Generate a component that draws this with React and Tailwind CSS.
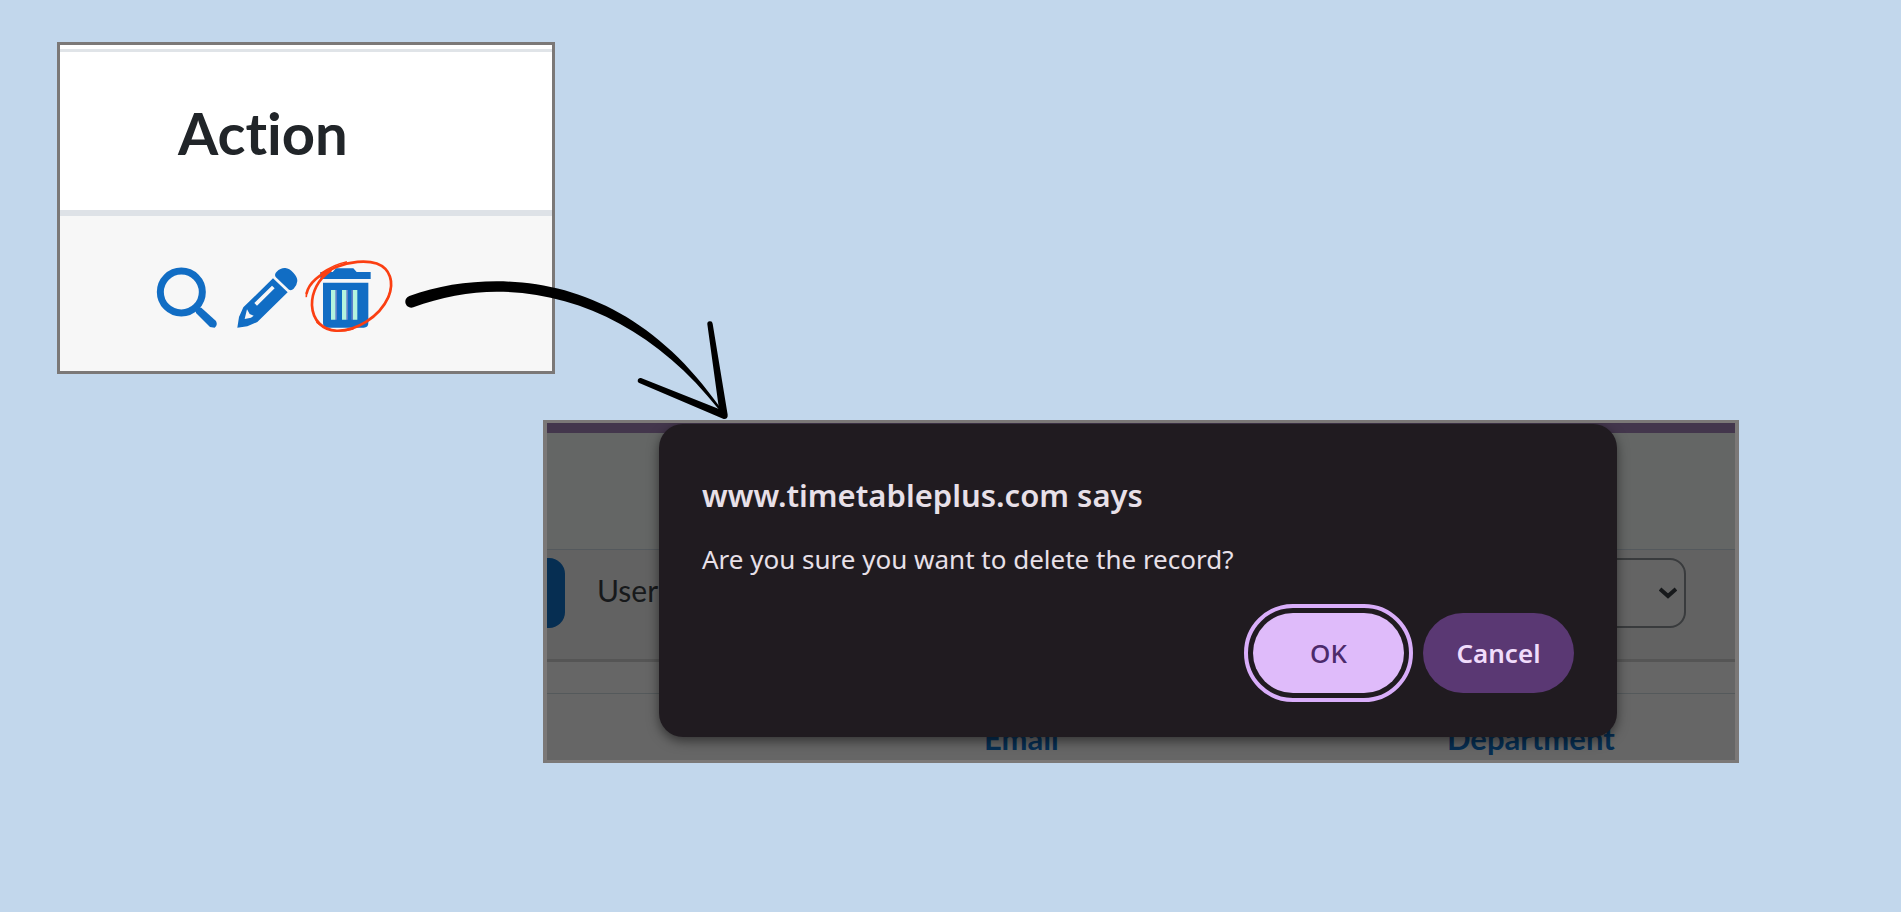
function SearchIcon() {
  return (
    <svg viewBox="48 82 189 186" className="h-[62px] w-[63px]" aria-hidden="true">
      <circle cx="124" cy="157" r="63" fill="none" stroke="currentColor" strokeWidth="21" />
      <path d="M166 200 L184 204 L228 244 Q234 256 224 264 L210 262 L168 220 Z" fill="currentColor" />
    </svg>
  );
}

function PencilIcon() {
  return (
    <svg viewBox="288 82 189 186" className="h-[62px] w-[63px]" aria-hidden="true">
      <path
        fill="currentColor"
        d="M407 112 Q402 104 410 96 Q422 84 436 85 Q448 86 460 99 Q473 113 472 124 Q471 137 461 147 Q454 154 447 150 Z"
      />
      <path
        fill="currentColor"
        fillRule="evenodd"
        d="M399 116 L443 158 L352 247 L322 260 L292 264 L297 232 L310 203 Z M396 138 L343 190 L351 198 L404 146 Z M321 209 L314 238 L333 234 L341 228 L329 223 Z"
      />
    </svg>
  );
}

function TrashIcon() {
  return (
    <svg viewBox="528 82 168 186" className="h-[62px] w-14" aria-hidden="true">
      <path fill="currentColor" d="M541 97 H578 L588 86 H640 L650 97 H692 V118 H541 Z" />
      <path fill="currentColor" d="M549 129 H685 V250 Q685 264 671 264 H563 Q549 264 549 250 Z" />
      <path fill="#5f7fc8" d="M585 151 h6 v89 h-6 Z M618 151 h6 v89 h-6 Z M634 151 h6 v89 h-6 Z" />
      <path fill="#b4f3de" d="M573 151 h13 v89 h-13 Z M606 151 h13 v89 h-13 Z M639 151 h13 v89 h-13 Z" />
    </svg>
  );
}

function HandCircle() {
  return (
    <svg
      viewBox="490 55 280 230"
      className="pointer-events-none absolute -top-[9px] -left-[13px] h-[77px] w-[93px] max-w-none"
      fill="none"
      stroke="#fb3f12"
      strokeLinecap="round"
      aria-hidden="true"
    >
      <path
        strokeWidth="8"
        d="M573 92 C535 118 516 158 517 196 C519 242 550 272 590 273 C650 275 720 232 747 172 C766 126 752 86 712 71 C680 60 630 65 590 81 C545 100 508 128 501 160"
      />
      <path strokeWidth="5" d="M501 158 L500 170 M620 66 C590 72 565 86 545 100 M532 248 C560 273 600 280 640 268 M752 110 C759 130 757 150 744 178" />
    </svg>
  );
}

function Arrow() {
  return (
    <svg
      viewBox="0 0 1080 570"
      className="pointer-events-none absolute top-[250px] left-[390px] z-10 h-[190px] w-[360px]"
      aria-hidden="true"
    >
      <path d="M58 138 C140 108 230 94 320 94 C560 94 800 200 990 472 L986 478 C800 240 560 125 320 125 C240 125 150 142 70 172 A18 18 0 0 1 58 138 Z" />
      <path d="M952 223 A8 8 0 0 1 968 221 L1013 494 Q1014 508 1001 507 L746 398 A8 8 0 0 1 753 384 L987 477 Z" />
    </svg>
  );
}

function ActionPanel() {
  return (
    <section className="w-[498px] border-[3px] border-[#7b7877] bg-[#f7f7f7] font-[Lato,sans-serif]">
      <div className="h-[7px] border-b-[3px] border-[#e0e4e8] bg-white" />
      <table className="w-full border-collapse text-left">
        <thead>
          <tr className="border-b-[6px] border-[#dee2e7] bg-white">
            <th className="h-[161px] pt-1 pl-[118px] text-[58px] leading-none font-bold text-[#212529] [font-variant-ligatures:none]">
              Action
            </th>
          </tr>
        </thead>
        <tbody>
          <tr>
            <td className="h-[158px] pt-2 pl-24">
              <div className="flex items-center gap-[17px] text-[#116dc4]">
                <button type="button" aria-label="View">
                  <SearchIcon />
                </button>
                <button type="button" aria-label="Edit">
                  <PencilIcon />
                </button>
                <button type="button" aria-label="Delete" className="relative">
                  <TrashIcon />
                  <HandCircle />
                </button>
              </div>
            </td>
          </tr>
        </tbody>
      </table>
    </section>
  );
}

function Dialog() {
  return (
    <div
      role="dialog"
      aria-labelledby="dialog-title"
      className="absolute top-px right-[118px] left-28 flex h-[313px] flex-col rounded-3xl bg-[#201b20] px-[43px] pt-[51px] font-['Noto_Sans',sans-serif] text-[#e8e0e8] shadow-[0_4px_12px_rgba(0,0,0,0.5)]"
    >
      <h1 id="dialog-title" className="text-[31px] leading-10 font-semibold">
        www.timetableplus.com says
      </h1>
      <p className="mt-[26px] text-[26px] leading-9">Are you sure you want to delete the record?</p>
      <div className="mt-9 flex justify-end gap-[19px] text-[26px] font-semibold">
        <button
          type="button"
          className="h-20 w-[151px] rounded-full bg-[#dfbbfa] font-medium text-[#4c2a6b] outline-4 outline-offset-[5px] outline-[#d9aefa]"
        >
          OK
        </button>
        <button type="button" className="h-20 w-[151px] rounded-full bg-[#5a3873] text-[#f0dcfb]">
          Cancel
        </button>
      </div>
    </div>
  );
}

function RecordsPanel() {
  return (
    <section className="relative mt-[46px] mr-[162px] ml-[543px] overflow-hidden border-x-4 border-y-[3px] border-[#7b7877] bg-[#666666] font-[Lato,sans-serif]">
      <div className="h-[10px] bg-[#43364c]" />
      <div className="h-[117px] border-b border-[#54595d] bg-[#646665]" />
      <div className="flex h-28 items-start border-b-[3px] border-[#555555] bg-[#626262] pt-2">
        <button type="button" aria-label="Apply" className="h-[70px] w-[18px] rounded-r-2xl bg-[#062e52]" />
        <label htmlFor="user" className="ml-8 text-[30px] leading-[64px] text-[#17191b]">
          User
        </label>
        <div className="relative ml-auto mr-[49px]">
          <select
            id="user"
            className="h-[70px] w-80 appearance-none rounded-2xl border-2 border-[#393b3d] bg-[#646464]"
          />
          <svg
            viewBox="0 0 18 12"
            className="pointer-events-none absolute top-[29px] right-[9px] h-3 w-[18px]"
            fill="none"
            stroke="#17191b"
            strokeWidth="4"
            aria-hidden="true"
          >
            <path d="M1 2 L9 9 L17 2" />
          </svg>
        </div>
      </div>
      <div className="h-8 border-b border-[#54595b]" />
      <table className="w-full table-fixed border-collapse text-left text-[31px] leading-8 font-bold text-[#062e52]">
        <thead>
          <tr>
            <th className="w-[437px] pt-7 pb-1.5" />
            <th className="w-[463px] pt-7 pb-1.5">Email</th>
            <th className="pt-7 pb-1.5">Department</th>
          </tr>
        </thead>
      </table>
      <Dialog />
    </section>
  );
}

export default function App() {
  return (
    <main className="relative min-h-screen bg-[#c2d7ec] pt-[42px] pb-16">
      <div className="pl-[57px]">
        <ActionPanel />
      </div>
      <RecordsPanel />
      <Arrow />
    </main>
  );
}
